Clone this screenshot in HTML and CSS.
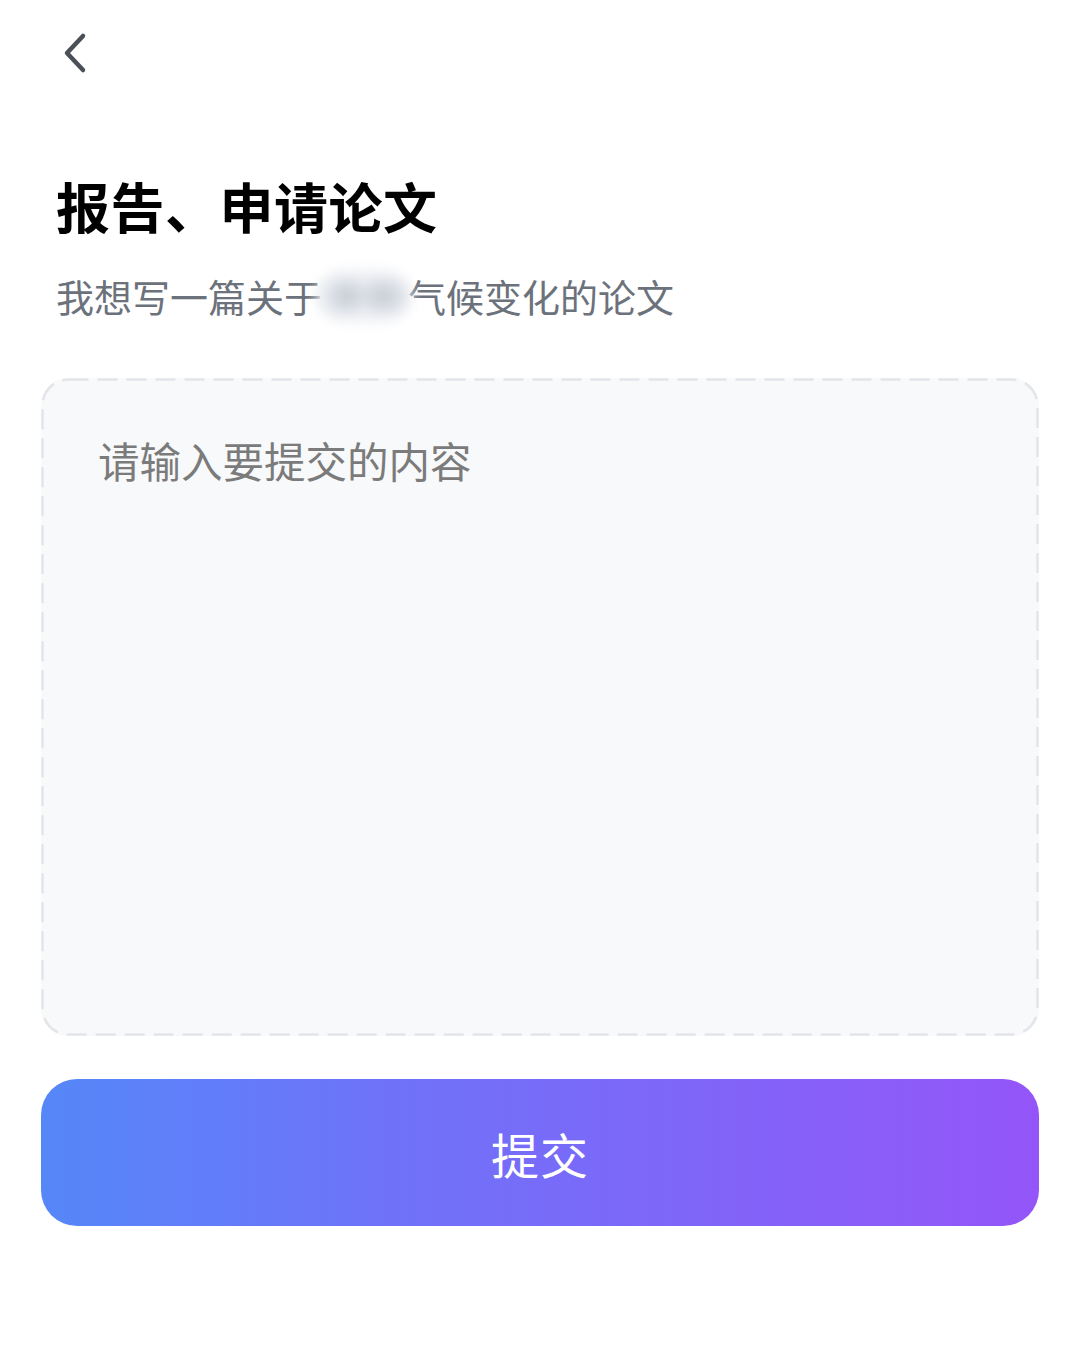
FILE: index.html
```html
<!DOCTYPE html>
<html lang="zh">
<head>
<meta charset="utf-8">
<title>报告、申请论文</title>
<link rel="stylesheet" href="styles.css">
</head>
<body>
<div class="page">
  <header class="topbar">
    <button class="back" aria-label="返回">
      <svg width="40" height="50" viewBox="0 0 40 50"><path d="M26 7 L10 24 L26 41" fill="none" stroke="#4b5058" stroke-width="4.5" stroke-linecap="round" stroke-linejoin="round"/></svg>
    </button>
  </header>
  <h1 class="title">报告、申请论文</h1>
  <p class="subtitle">我想写一篇关于<span class="blur"></span>气候变化的论文</p>
  <div class="inputbox">
    <svg class="dash" width="998" height="658" viewBox="0 0 998 658"><rect x="1.5" y="1.5" width="995" height="655" rx="26" ry="26" fill="none" stroke="#e3e5e9" stroke-width="2.5" stroke-dasharray="20 9"/></svg>
    <textarea class="field" placeholder="请输入要提交的内容"></textarea>
  </div>
  <button class="submit">提交</button>
</div>
</body>
</html>
```
FILE: styles.css
```css
* { box-sizing: border-box; }
html, body { margin: 0; padding: 0; background: #ffffff; }
body { font-family: "Noto Sans CJK SC", "Noto Sans", sans-serif; }
.page { width: 1080px; height: 1354px; padding: 0 41px; display: flex; flex-direction: column; }
.topbar { height: 110px; display: flex; align-items: flex-start; padding-top: 29px; }
.back { border: 0; background: none; padding: 0; margin-left: 16px; width: 40px; height: 50px; cursor: pointer; }
.back svg { display: block; }
.title { margin: 56px 0 0 15px; font-size: 54px; line-height: 80px; font-weight: 700; color: #000; letter-spacing: 0.5px; }
.subtitle { margin: 22px 0 0 15px; font-size: 38px; line-height: 56px; color: #6c727c; display: flex; align-items: center; }
.blur { display: inline-block; width: 96px; height: 50px; margin: 0 -4px 0 -6px; border-radius: 25px;
  background: radial-gradient(ellipse 24px 20px at 32% 50%, #c3c9d2 0%, rgba(208,213,221,0.7) 60%, transparent 100%),
              radial-gradient(ellipse 26px 20px at 70% 50%, #c5cbd4 0%, rgba(208,213,221,0.7) 60%, transparent 100%),
              #eceef2;
  filter: blur(6px); }
.inputbox { position: relative; margin-top: 54px; height: 658px; border-radius: 27px; background: #f8f9fa; }
.dash { position: absolute; left: 0; top: 0; pointer-events: none; }
.field { display: block; width: 100%; height: 100%; border: 0; outline: none; resize: none; background: transparent;
  padding: 51px 57px; font-family: inherit; font-size: 41.5px; line-height: 62px; color: #333; }
.field::placeholder { color: #7b7b7b; }
.submit { margin-top: 43px; height: 147px; border: 0; border-radius: 36px; width: 100%;
  background: linear-gradient(90deg, #5587f8 0%, #6f72f9 35%, #7f66f9 65%, #9455f8 100%);
  color: #fff; font-family: inherit; font-size: 48px; letter-spacing: 1px; cursor: pointer; }
```
